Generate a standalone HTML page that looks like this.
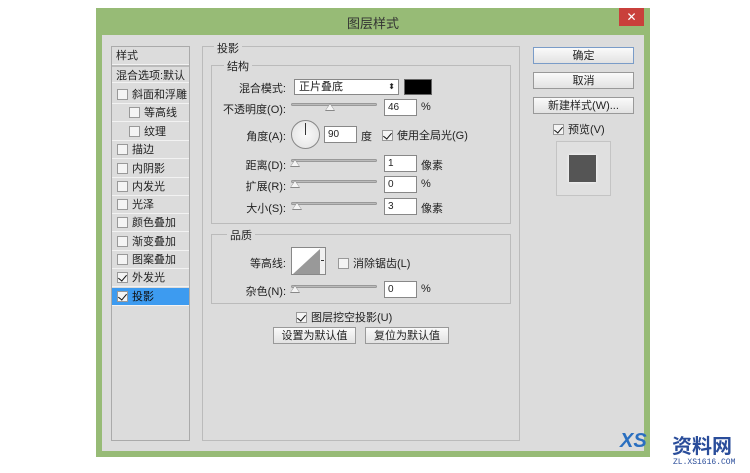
<!DOCTYPE html>
<html><head><meta charset="utf-8"><style>
*{margin:0;padding:0;box-sizing:border-box}
body{width:750px;height:473px;background:#fff;position:relative;overflow:hidden;font-family:"Liberation Sans","Microsoft YaHei","Noto Sans CJK SC",sans-serif;font-size:11px;color:#222}
.a{position:absolute}
.frame{left:96px;top:8px;width:554px;height:449px;background:#97bb76}
.inner{left:102px;top:35px;width:542px;height:416px;background:#dcdcdc}
.title{left:96px;top:13px;width:554px;text-align:center;font-size:13px;color:#333}
.close{left:619px;top:8px;width:25px;height:18px;background:#c9403b;color:#fff;text-align:center;font-size:12px;line-height:18px}
.list{left:111px;top:46px;width:79px;height:395px;border:1px solid #aaa;background:#dcdcdc}
.row{position:absolute;left:0;width:77px;height:18px;border-bottom:1px solid #f2f2f2;line-height:18px;font-size:11px;white-space:nowrap}
.cb{display:inline-block;width:11px;height:11px;border:1px solid #999;background:#f4f4f4;vertical-align:-2px;margin-right:4px;position:relative}
.cb.k::after{content:"";position:absolute;left:2px;top:0px;width:4px;height:7px;border:solid #111;border-width:0 1.5px 1.5px 0;transform:rotate(40deg)}
.sel{background:#3d9bf0;color:#111}
.panel{left:202px;top:46px;width:318px;height:395px;border:1px solid #bbb}
.grp{border:1px solid #bbb;position:absolute}
.lg{position:absolute;background:#dcdcdc;padding:0 3px;font-size:11px}
.lbl{position:absolute;text-align:right;font-size:11px;white-space:nowrap}
.inp{position:absolute;width:33px;height:17px;border:1px solid #888;background:#fff;font-size:10px;padding-left:3px;line-height:15px}
.sl{position:absolute;height:3px;width:86px;background:#bbb;border:1px solid #999;border-radius:2px}
.th{position:absolute;width:0;height:0;border-left:5px solid transparent;border-right:5px solid transparent;border-bottom:8px solid #888}
.th::after{content:"";position:absolute;left:-4px;top:1px;border-left:4px solid transparent;border-right:4px solid transparent;border-bottom:6px solid #f4f4f4}
.btn{position:absolute;border:1px solid #999;background:linear-gradient(#fafafa,#e2e2e2);text-align:center;font-size:11px;line-height:16px}
</style></head><body>
<div class="a frame"></div>
<div class="a inner"></div>
<div class="a title">图层样式</div>
<div class="a close">✕</div>

<div class="a list">
<div class="row" style="top:0;padding-left:4px">样式</div>
<div class="row" style="top:18px;padding-left:4px;border-top:2px solid #bbb">混合选项:默认</div>
<div class="row" style="top:39px;padding-left:5px"><span class="cb"></span>斜面和浮雕</div>
<div class="row" style="top:57px;padding-left:17px"><span class="cb"></span>等高线</div>
<div class="row" style="top:76px;padding-left:17px"><span class="cb"></span>纹理</div>
<div class="row" style="top:94px;padding-left:5px"><span class="cb"></span>描边</div>
<div class="row" style="top:113px;padding-left:5px"><span class="cb"></span>内阴影</div>
<div class="row" style="top:131px;padding-left:5px"><span class="cb"></span>内发光</div>
<div class="row" style="top:149px;padding-left:5px"><span class="cb"></span>光泽</div>
<div class="row" style="top:167px;padding-left:5px"><span class="cb"></span>颜色叠加</div>
<div class="row" style="top:186px;padding-left:5px"><span class="cb"></span>渐变叠加</div>
<div class="row" style="top:204px;padding-left:5px"><span class="cb"></span>图案叠加</div>
<div class="row" style="top:222px;padding-left:5px"><span class="cb k"></span>外发光</div>
<div class="row sel" style="top:241px;padding-left:5px"><span class="cb k"></span>投影</div>
</div>

<div class="a panel"></div>
<div class="lg" style="left:214px;top:40px">投影</div>
<div class="grp" style="left:211px;top:65px;width:300px;height:159px"></div>
<div class="lg" style="left:224px;top:58px">结构</div>

<div class="lbl" style="left:220px;top:80px;width:66px">混合模式:</div>
<div class="a" style="left:294px;top:79px;width:105px;height:16px;border:1px solid #888;background:#fff;font-size:11px;padding-left:4px;line-height:14px">正片叠底<span style="position:absolute;right:3px;font-size:8px">⬍</span></div>
<div class="a" style="left:404px;top:79px;width:28px;height:16px;background:#000;border:1px solid #666"></div>

<div class="lbl" style="left:220px;top:101px;width:66px">不透明度(O):</div>
<div class="sl" style="left:291px;top:103px"></div><div class="th" style="left:325px;top:103px"></div>
<div class="inp" style="left:384px;top:99px">46</div><div class="lbl" style="left:421px;top:101px">%</div>

<div class="lbl" style="left:220px;top:128px;width:66px">角度(A):</div>
<div class="a" style="left:291px;top:120px;width:29px;height:29px;border-radius:50%;border:1px solid #888;background:radial-gradient(#fafafa,#e0e0e0)"></div>
<div class="a" style="left:305px;top:123px;width:1px;height:12px;background:#333"></div>
<div class="inp" style="left:324px;top:126px">90</div><div class="lbl" style="left:361px;top:128px">度</div>
<div class="lbl" style="left:382px;top:127px"><span class="cb k"></span>使用全局光(G)</div>

<div class="lbl" style="left:220px;top:157px;width:66px">距离(D):</div>
<div class="sl" style="left:291px;top:159px"></div><div class="th" style="left:290px;top:159px"></div>
<div class="inp" style="left:384px;top:155px">1</div><div class="lbl" style="left:421px;top:157px">像素</div>
<div class="lbl" style="left:220px;top:178px;width:66px">扩展(R):</div>
<div class="sl" style="left:291px;top:180px"></div><div class="th" style="left:290px;top:180px"></div>
<div class="inp" style="left:384px;top:176px">0</div><div class="lbl" style="left:421px;top:178px">%</div>
<div class="lbl" style="left:220px;top:200px;width:66px">大小(S):</div>
<div class="sl" style="left:291px;top:202px"></div><div class="th" style="left:292px;top:202px"></div>
<div class="inp" style="left:384px;top:198px">3</div><div class="lbl" style="left:421px;top:200px">像素</div>

<div class="grp" style="left:211px;top:234px;width:300px;height:70px"></div>
<div class="lg" style="left:227px;top:227px">品质</div>
<div class="lbl" style="left:220px;top:255px;width:66px">等高线:</div>
<div class="a" style="left:291px;top:247px;width:35px;height:28px;border:1px solid #888;background:#fff;overflow:hidden">
<svg width="33" height="26"><polygon points="1,26 28,1 28,26" fill="#999"/><rect x="28" y="0" width="5" height="26" fill="#f0f0f0"/><rect x="29" y="12" width="3" height="1" fill="#333"/></svg></div>
<div class="lbl" style="left:338px;top:255px"><span class="cb"></span>消除锯齿(L)</div>
<div class="lbl" style="left:220px;top:283px;width:66px">杂色(N):</div>
<div class="sl" style="left:291px;top:285px"></div><div class="th" style="left:290px;top:285px"></div>
<div class="inp" style="left:384px;top:281px">0</div><div class="lbl" style="left:421px;top:283px">%</div>

<div class="lbl" style="left:296px;top:309px"><span class="cb k"></span>图层挖空投影(U)</div>
<div class="btn" style="left:273px;top:327px;width:83px;height:17px">设置为默认值</div>
<div class="btn" style="left:365px;top:327px;width:84px;height:17px">复位为默认值</div>

<div class="btn" style="left:533px;top:47px;width:101px;height:17px;border-color:#7a9cc8">确定</div>
<div class="btn" style="left:533px;top:72px;width:101px;height:17px">取消</div>
<div class="btn" style="left:533px;top:97px;width:101px;height:17px">新建样式(W)...</div>
<div class="lbl" style="left:553px;top:121px"><span class="cb k"></span>预览(V)</div>
<div class="a" style="left:556px;top:141px;width:55px;height:55px;border:1px solid #c4c4c4;background:#e0e0e0"></div>
<div class="a" style="left:569px;top:155px;width:27px;height:27px;background:#555;box-shadow:0 0 3px #fff"></div>

<div class="a" style="left:620px;top:430px;font-size:20px;font-weight:bold;color:#2a6fc0;font-style:italic">XS</div>
<div class="a" style="left:672px;top:430px;font-size:20px;font-weight:bold;color:#2a4d9a">资料网</div>
<div class="a" style="left:673px;top:458px;font-size:8px;color:#2a4d9a;font-family:'Liberation Mono',monospace">ZL.XS1616.COM</div>
</body></html>
